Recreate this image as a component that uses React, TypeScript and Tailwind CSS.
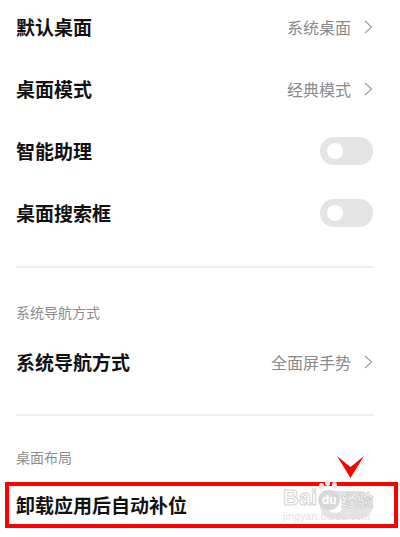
import React from 'react';

const font = { fontFamily: '"Noto Sans CJK SC", "Noto Sans", sans-serif' };

const Chevron: React.FC = () => (
  <svg width="9" height="14" viewBox="0 0 9 14" className="ml-[13px]">
    <path d="M1 1 L7.5 7 L1 13" fill="none" stroke="#a3a3a3" strokeWidth="1.3" />
  </svg>
);

const Toggle: React.FC = () => (
  <div className="w-[53px] h-[28px] rounded-full bg-[#e4e4e4] flex items-center pl-[7px]">
    <div className="w-[16px] h-[16px] rounded-full bg-white" />
  </div>
);

const Row: React.FC<{ title: string; value?: string; toggle?: boolean; className?: string }> = ({
  title,
  value,
  toggle,
  className = '',
}) => (
  <div className={`h-[62px] flex items-center justify-between pl-4 pr-[27px] ${className}`}>
    <span className="text-[19px] font-semibold text-[#111]">{title}</span>
    {value && (
      <div className="flex items-center">
        <span className="text-[16px] text-[#8a8a8a]">{value}</span>
        <Chevron />
      </div>
    )}
    {toggle && <Toggle />}
  </div>
);

const Divider: React.FC<{ className?: string }> = ({ className = '' }) => (
  <div className={`mx-4 mr-[27px] h-[2px] bg-[#efefef] ${className}`} />
);

const Header: React.FC<{ text: string; className?: string }> = ({ text, className = '' }) => (
  <div className={`h-[20px] pl-4 flex items-center text-[14px] text-[#8c8c8c] ${className}`}>{text}</div>
);

export default function App() {
  return (
    <div className="w-[400px] h-[537px] bg-white overflow-hidden relative" style={font}>
      <Row title="默认桌面" value="系统桌面" className="-mt-[4px]" />
      <Row title="桌面模式" value="经典模式" />
      <Row title="智能助理" toggle />
      <Row title="桌面搜索框" toggle />
      <Divider className="mt-[22px]" />
      <Header text="系统导航方式" className="mt-[34px]" />
      <Row title="系统导航方式" value="全面屏手势" className="mt-[9px]" />
      <Divider className="mt-[21px]" />
      <Header text="桌面布局" className="mt-[31px]" />

      {/* highlighted row */}
      <div className="mt-[15px] ml-[5px] w-[393px] h-[46px] border-4 border-[#ff0000] flex items-center justify-between pl-[7px] pr-[21px]">
        <span className="text-[19px] font-semibold text-[#111]">卸载应用后自动补位</span>
        <Toggle />
      </div>

      {/* red marker */}
      <svg className="absolute left-[337px] top-[456px]" width="27" height="23" viewBox="0 0 27 23">
        <polygon points="0,0 13.5,11 27,0 13.5,22" fill="#ff0000" />
      </svg>

      {/* watermark */}
      <div className="absolute left-[283px] top-[486px] flex flex-col items-start pointer-events-none">
        <div className="flex items-end">
          <span
            className="text-[22px] leading-[24px] text-white font-bold"
            style={{ WebkitTextStroke: '1px #d4d4d4', fontFamily: '"Liberation Sans", sans-serif' }}
          >
            Bai
          </span>
          <div className="relative ml-[1px] w-[22px] h-[20px] rounded-full bg-[#d8d8d8] text-white text-[12px] leading-[20px] text-center font-bold" style={{ fontFamily: '"Liberation Sans", sans-serif' }}>
            du
            <div className="absolute -top-[7px] left-[1px] w-[5px] h-[6px] rounded-full bg-[#e6e6e6]" />
            <div className="absolute -top-[10px] left-[7px] w-[5px] h-[6px] rounded-full bg-[#e6e6e6]" />
            <div className="absolute -top-[8px] left-[14px] w-[5px] h-[6px] rounded-full bg-[#e6e6e6]" />
          </div>
          <span
            className="ml-[1px] mb-[1px] text-[16px] leading-[20px] text-white font-bold"
            style={{ WebkitTextStroke: '0.8px #cfcfcf' }}
          >
            经验
          </span>
        </div>
        <span
          className="mt-[2px] text-[10px] leading-[10px] text-[#e0e0e0] tracking-[0.4px]"
          style={{ fontFamily: '"Liberation Sans", sans-serif' }}
        >
          jingyan.baidu.com
        </span>
      </div>
    </div>
  );
}
